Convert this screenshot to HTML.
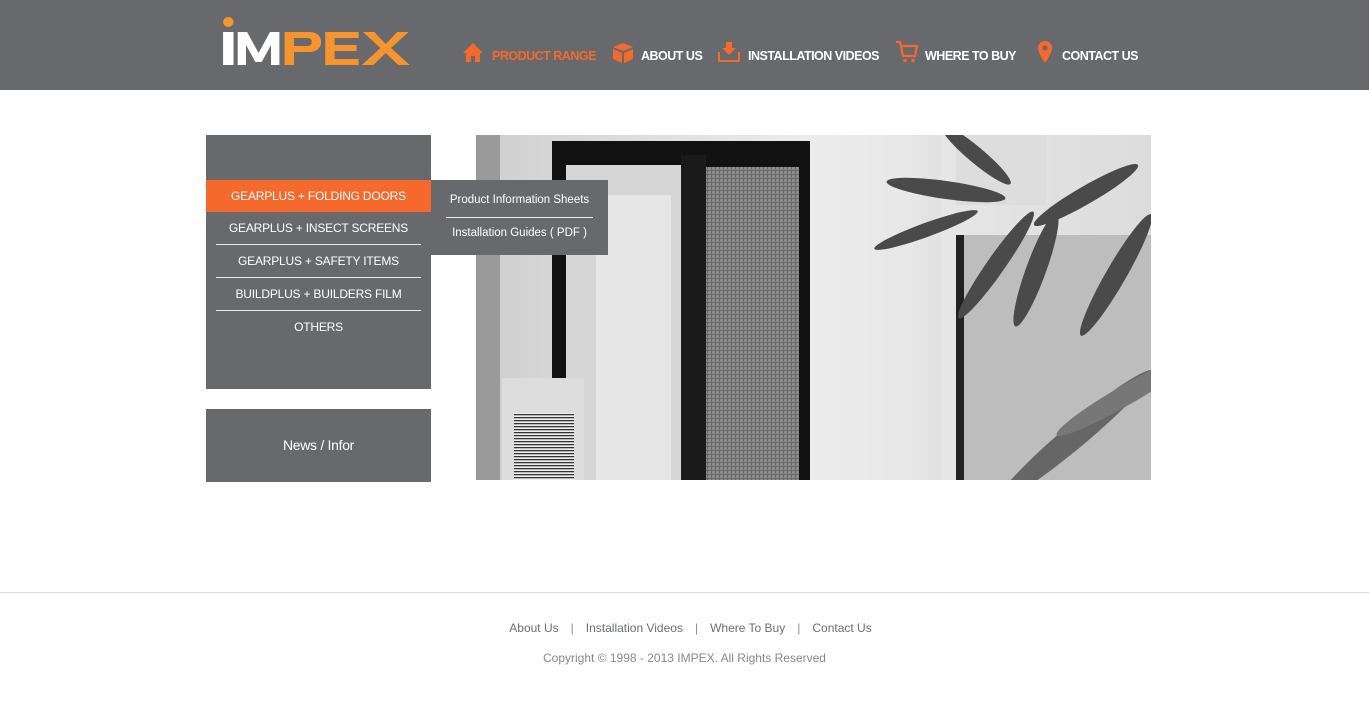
<!DOCTYPE html>
<html><head><meta charset="utf-8"><style>
*{margin:0;padding:0;box-sizing:border-box}
body{width:1369px;height:717px;background:#fff;font-family:"Liberation Sans",Arial,sans-serif;position:relative;overflow:hidden}
.hdr{position:absolute;left:0;top:0;width:1369px;height:90px;background:#67696d}
.logo{position:absolute;left:221px;top:16px}
.nav{position:absolute;top:49px;font-size:12.5px;font-weight:bold;color:#fff;letter-spacing:-0.5px;white-space:nowrap}
.nav.act{color:#f56a2c}
.ic{position:absolute}
.side{position:absolute;left:206px;top:135px;width:225px;height:254px;background:#67696d}
.item{position:absolute;left:10px;width:205px;height:33px;color:#fff;font-size:12px;text-align:center;line-height:33px;border-bottom:1px solid #e8e8e8;letter-spacing:-0.2px}
.item.act{left:0;width:225px;background:#f56a2c;border:none;top:45px;height:32px;line-height:32px}
.sub{position:absolute;left:431px;top:180px;width:177px;height:75px;background:#67696d;color:#fff;font-size:11.5px}
.sub div{position:absolute;left:15px;width:147px;text-align:center}
.news{position:absolute;left:206px;top:409px;width:225px;height:73px;background:#67696d;color:#fff;font-size:14px;text-align:center;line-height:73px;letter-spacing:-0.3px}
.photo{position:absolute;left:476px;top:135px;width:675px;height:345px;overflow:hidden}
.foot{position:absolute;top:592px;left:0;width:1369px;border-top:1px solid #ddd}
.fl{position:absolute;top:621px;width:1369px;text-align:center;font-size:12px;color:#6a6e78;padding-left:12px}
.fl span{margin:0 12px;color:#8a8e98}
.cp{position:absolute;top:651px;width:1369px;text-align:center;font-size:12px;color:#888;padding-left:-4px}
</style></head><body>
<div class="hdr">
<svg class="logo" width="196" height="52" viewBox="0 0 188 52" preserveAspectRatio="none">
<circle cx="7" cy="6" r="5" fill="#f7942e"/>
<rect x="2" y="16" width="10" height="33" fill="#fff"/>
<path d="M16 49V16h9l11 21 11-21h9v33h-8V29l-9 17h-6l-9-17v20z" fill="#fff"/>
<path d="M61 49V16h23c8 0 12 4 12 10s-4 10-12 10H70v13zM70 22v8h13c3 0 4-2 4-4s-1-4-4-4z" fill="#f7942e"/>
<path d="M100 16h32v6h-23v7h21v6h-21v8h23v6h-32z" fill="#f7942e"/>
<path d="M136 16h11l11 12 11-12h11l-17 16 18 17h-11l-12-12-12 12h-11l18-17z" fill="#f7942e"/>
</svg>
<svg class="ic" style="left:462px;top:42px" width="22" height="21" viewBox="0 0 22 21"><path d="M11 1L1 11h3v9h5v-6h4v6h5v-9h3z" fill="#f56a2c"/></svg>
<div class="nav act" style="left:492px">PRODUCT RANGE</div>
<svg class="ic" style="left:612px;top:42px" width="22" height="22" viewBox="0 0 22 22"><path d="M11 1l10 4-10 4-10-4z M1 7l9 4v10l-9-4z M21 7l-9 4v10l9-4z" fill="#f56a2c"/></svg>
<div class="nav" style="left:641px">ABOUT US</div>
<svg class="ic" style="left:717px;top:41px" width="24" height="22" viewBox="0 0 24 22"><path d="M9 1h6v6h4l-7 7-7-7h4z" fill="#f56a2c"/><path d="M1 11v10h22V11h-2v8H3v-8z" fill="#f56a2c"/></svg>
<div class="nav" style="left:748px">INSTALLATION VIDEOS</div>
<svg class="ic" style="left:895px;top:40px" width="24" height="24" viewBox="0 0 24 24"><path d="M1 2h4l3 14h12l2-10H7" fill="none" stroke="#f56a2c" stroke-width="2.2"/><circle cx="10" cy="20.5" r="1.8" fill="#f56a2c"/><circle cx="18" cy="20.5" r="1.8" fill="#f56a2c"/></svg>
<div class="nav" style="left:925px">WHERE TO BUY</div>
<svg class="ic" style="left:1036px;top:40px" width="18" height="24" viewBox="0 0 18 24"><path d="M9 1a7 7 0 0 0-7 7c0 5 7 15 7 15s7-10 7-15a7 7 0 0 0-7-7z" fill="#f56a2c"/><circle cx="9" cy="8" r="2.5" fill="#67696d"/></svg>
<div class="nav" style="left:1062px">CONTACT US</div>
</div>

<div class="side">
<div class="item act">GEARPLUS + FOLDING DOORS</div>
<div class="item" style="top:77px">GEARPLUS + INSECT SCREENS</div>
<div class="item" style="top:110px">GEARPLUS + SAFETY ITEMS</div>
<div class="item" style="top:143px">BUILDPLUS + BUILDERS FILM</div>
<div class="item" style="top:176px;border:none">OTHERS</div>
</div>

<div class="photo">
<svg width="675" height="345" viewBox="0 0 675 345">
<defs><linearGradient id="w" x1="0" x2="1"><stop offset="0" stop-color="#cfcfcf"/><stop offset=".5" stop-color="#ececec"/><stop offset="1" stop-color="#dcdcdc"/></linearGradient>
<pattern id="m" width="4" height="4" patternUnits="userSpaceOnUse"><rect width="4" height="4" fill="#6a6a6a"/><rect width="3" height="3" fill="#8c8c8c"/></pattern>
<pattern id="g" width="3" height="3" patternUnits="userSpaceOnUse"><rect width="3" height="3" fill="#eee"/><rect width="3" height="1.3" fill="#333"/></pattern></defs>
<rect width="675" height="345" fill="url(#w)"/>
<rect x="0" width="24" height="345" fill="#9a9a9a"/>
<rect x="76" y="6" width="258" height="339" fill="#111"/>
<rect x="90" y="30" width="115" height="315" fill="#d6d6d6"/>
<rect x="120" y="60" width="75" height="290" fill="#e6e6e6"/>
<rect x="230" y="32" width="93" height="313" fill="url(#m)"/>
<rect x="205" y="20" width="25" height="325" fill="#1a1a1a"/>
<rect x="26" y="243" width="82" height="102" fill="#ddd"/>
<rect x="38" y="278" width="60" height="67" fill="url(#g)"/>
<rect x="445" y="0" width="20" height="345" fill="#e2e2e2"/>
<rect x="480" y="100" width="195" height="245" fill="#bdbdbd"/>
<rect x="480" y="100" width="8" height="245" fill="#222"/>
<rect x="480" y="0" width="90" height="70" fill="#ddd"/>
<g fill="#4a4a4a">
<ellipse cx="470" cy="55" rx="60" ry="9" transform="rotate(8 470 55)"/>
<ellipse cx="520" cy="130" rx="65" ry="9" transform="rotate(-55 520 130)"/>
<ellipse cx="560" cy="135" rx="60" ry="10" transform="rotate(-70 560 135)"/>
<ellipse cx="610" cy="60" rx="60" ry="9" transform="rotate(-30 610 60)"/>
<ellipse cx="640" cy="140" rx="70" ry="10" transform="rotate(-60 640 140)"/>
<ellipse cx="500" cy="20" rx="45" ry="8" transform="rotate(40 500 20)"/>
<ellipse cx="600" cy="300" rx="100" ry="12" transform="rotate(-40 600 300)" fill="#666"/>
<ellipse cx="650" cy="260" rx="80" ry="10" transform="rotate(-30 650 260)" fill="#777"/>
<ellipse cx="450" cy="95" rx="55" ry="7" transform="rotate(-20 450 95)"/>
</g>
</svg>
</div>

<div class="sub">
<div style="top:14px">Product Information Sheets</div>
<div style="top:37px;border-top:1px solid #eee;height:0"></div>
<div style="top:47px">Installation Guides ( PDF )</div>
</div>

<div class="news">News / Infor</div>

<div class="foot"></div>
<div class="fl">About Us<span>|</span>Installation Videos<span>|</span>Where To Buy<span>|</span>Contact Us</div>
<div class="cp">Copyright © 1998 - 2013 IMPEX. All Rights Reserved</div>
</body></html>
